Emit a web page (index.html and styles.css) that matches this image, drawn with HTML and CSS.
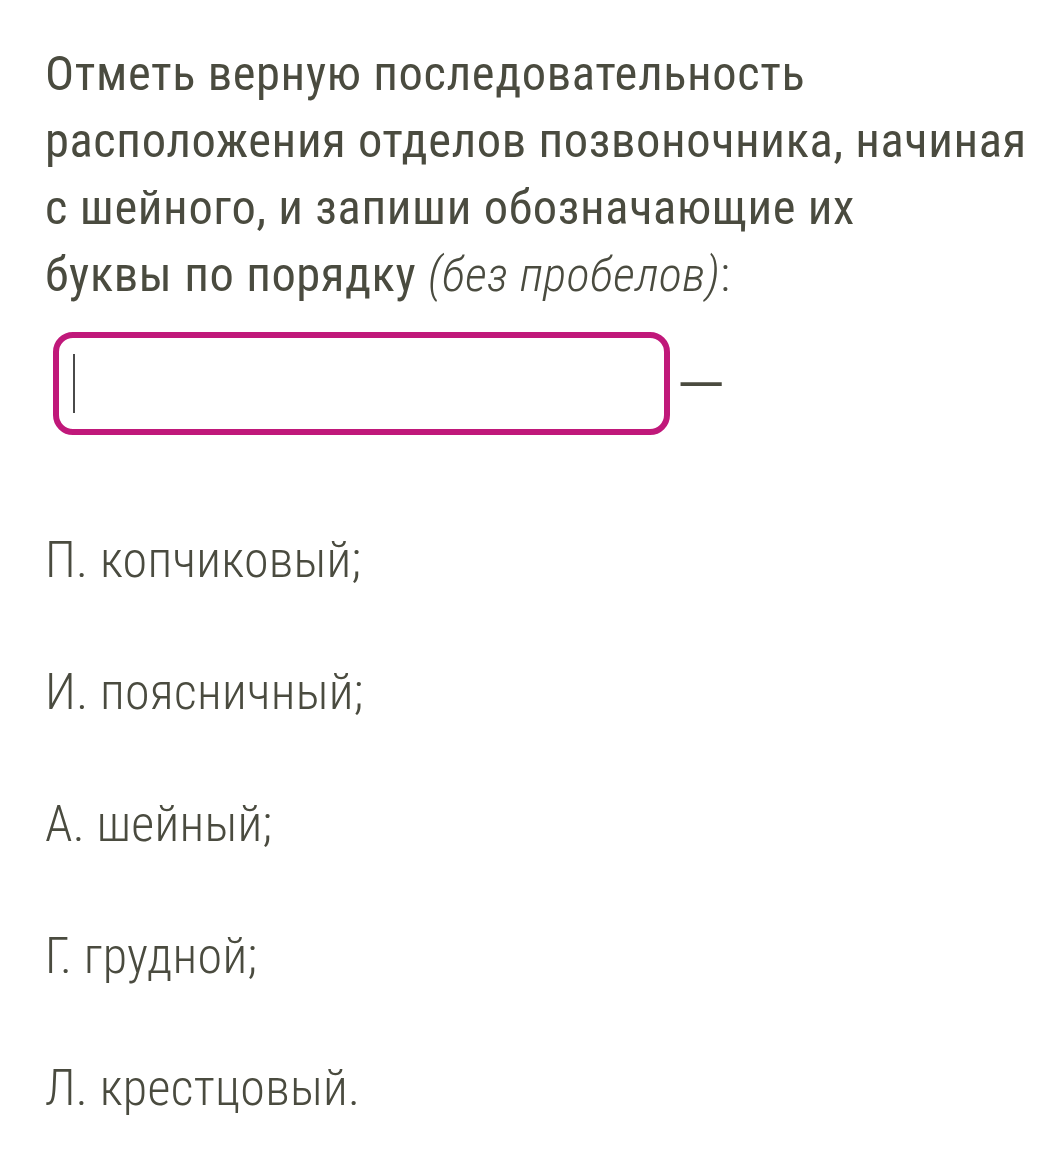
FILE: index.html
```html
<!DOCTYPE html>
<html lang="ru">
<head>
<meta charset="utf-8">
<link rel="stylesheet" href="styles.css">
</head>
<body>
<main class="task">
  <p class="question">Отметь верную последовательность расположения отделов позвоночника, начиная с&nbsp;шейного, и&nbsp;запиши обозначающие их<br>буквы по&nbsp;порядку <span class="note">(без пробелов)</span><span class="colon">:</span></p>
  <div class="answer-row">
    <div class="answer-box"><span class="caret"></span></div>
    <span class="dash">–</span>
  </div>
  <ul class="options">
    <li>П. копчиковый;</li>
    <li>И. поясничный;</li>
    <li>А. шейный;</li>
    <li>Г. грудной;</li>
    <li>Л. крестцовый.</li>
  </ul>
</main>
</body>
</html>
```

FILE: styles.css
```css
html, body {
  margin: 0;
  padding: 0;
  background: #ffffff;
}
body {
  font-family: "Roboto", "Liberation Sans", sans-serif;
  font-stretch: 75%;
  color: #4a4b3f;
}
.task {
  padding: 40px 20px 0 45px;
}
.question {
  margin: 0;
  width: 1010px;
  font-size: 48.5px;
  line-height: 67px;
  font-weight: 400;
  letter-spacing: 0.6px;
}
.note {
  font-style: italic;
  font-weight: 300;
  letter-spacing: 0.4px;
}
.colon {
  font-weight: 300;
}
.answer-row {
  display: flex;
  align-items: center;
  margin-top: 24px;
  margin-left: 8px;
  gap: 20px;
}
.answer-box {
  width: 591px;
  height: 91px;
  border: 6px solid #c0187a;
  border-radius: 20px;
  display: flex;
  align-items: center;
  padding-left: 14px;
}
.caret {
  width: 2px;
  height: 59px;
  background: #4a4a4a;
}
.dash {
  display: inline-block;
  font-size: 50px;
  font-weight: 400;
  line-height: 1;
  margin-top: 2px;
  margin-left: -3px;
  transform: scaleX(2);
}
.options {
  list-style: none;
  margin: 59px 0 0 0;
  padding: 0;
}
.options li {
  font-size: 50px;
  font-weight: 300;
  line-height: 132px;
  letter-spacing: 0.3px;
}
```
